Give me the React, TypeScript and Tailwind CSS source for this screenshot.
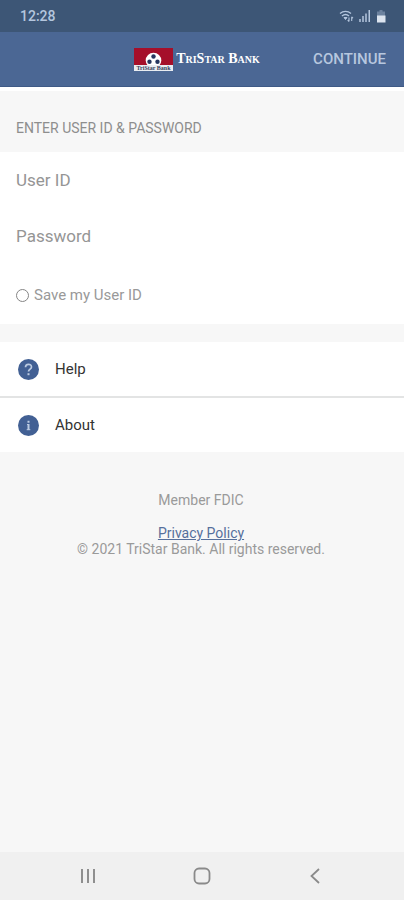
import React from "react";

const StatusBar: React.FC = () => {
  return (
    <div className="flex h-8 items-center justify-between bg-[#3d5676] pl-5 pr-[18px] text-[#b4c6de]">
      <span className="text-sm font-medium">12:28</span>
      <div className="flex items-center gap-[5px]">
        <svg width="15" height="13" viewBox="0 0 15 13" fill="none" stroke="currentColor" aria-hidden="true">
          <path d="M1 3.5C4.200 .7 8.800 .7 12 3.500" strokeWidth="1.300" />
          <path d="M3 6C5.200 4.100 7.800 4.100 10 6" strokeWidth="1.500" />
          <path d="M5 7.500h3L6.500 9.500z" fill="currentColor" />
          <path d="M10 7.500v4M8.700 10.200l1.300 1.300M12.700 11V6.800M14 8.100l-1.300-1.300" strokeWidth="1.100" />
        </svg>
        <svg width="12" height="12" viewBox="0 0 12 12" fill="currentColor" aria-hidden="true">
          <path d="M0 9h2v3H0zM3 6h2v6H3zM6 3.500h2V12H6z" opacity=".75" />
          <path d="M9.500 0H11v12H9.500z" />
        </svg>
        <svg width="10" height="13" viewBox="0 0 10 13" fill="currentColor" aria-hidden="true">
          <path d="M3.500 0h3v1.500H9V6H1V1.500h2.500z" opacity=".4" />
          <path d="M1 5.500h8.500v7H1z" className="text-[#dce4ef]" />
        </svg>
      </div>
    </div>
  );
};

const Logo: React.FC = () => {
  return (
    <div className="flex items-center gap-[3px] text-white">
      <svg width="39" height="23" viewBox="0 0 39 23" aria-hidden="true">
        <rect width="39" height="17" fill="#a50f2a" />
        <circle cx="19.500" cy="12.500" r="7.800" fill="#fff" />
        <circle cx="19.500" cy="8.500" r="2.200" fill="#26365f" />
        <circle cx="15.500" cy="13.800" r="2.200" fill="#26365f" />
        <circle cx="23.500" cy="13.800" r="2.200" fill="#26365f" />
        <rect y="17" width="39" height="6" fill="#e9ecf1" />
        <text
          x="19.500"
          y="22"
          textAnchor="middle"
          fontSize="6"
          fontWeight="700"
          fill="#35415c"
          fontFamily="'Liberation Serif', serif"
        >
          TriStar Bank
        </text>
      </svg>
      <span className="whitespace-nowrap font-['Liberation_Serif',serif] text-sm font-bold [font-variant-caps:small-caps]">
        TriStar Bank
      </span>
    </div>
  );
};

const Header: React.FC = () => {
  return (
    <header className="grid h-[55px] grid-cols-[1fr_auto_1fr] items-center border-b border-[#3f5a86] bg-[#4b6794] pl-2 pr-[18px]">
      <div />
      <Logo />
      <button type="button" className="justify-self-end text-[15px] font-medium text-[#b7c7df]">
        CONTINUE
      </button>
    </header>
  );
};

const LoginForm: React.FC = () => {
  return (
    <form>
      <h2 className="flex h-[65px] items-center border-t-4 border-white px-4 pt-3 text-sm text-[#8e8e8e]">
        ENTER USER ID &amp; PASSWORD
      </h2>
      <div className="bg-white px-4">
        <input
          type="text"
          aria-label="User ID"
          placeholder="User ID"
          className="block h-14 w-full text-[17px] outline-none placeholder:text-[#959595]"
        />
        <input
          type="password"
          aria-label="Password"
          placeholder="Password"
          className="block h-14 w-full text-[17px] outline-none placeholder:text-[#959595]"
        />
        <label className="flex h-15 items-center gap-[5px] pt-0.5 text-[15px] text-[#999]">
          <input type="checkbox" className="size-[13px] appearance-none rounded-full border border-[#858585] checked:bg-[#858585]" />
          Save my User ID
        </label>
      </div>
    </form>
  );
};

const HelpIcon: React.FC = () => {
  return (
    <svg width="21" height="21" viewBox="0 0 21 21" fill="none" stroke="#bccbe2" aria-hidden="true">
      <circle cx="10.500" cy="10.500" r="10.500" fill="#426094" stroke="none" />
      <path d="M7.500 8.200C7.500 4.400 13.500 4.400 13.500 7.900C13.500 10 10.500 10.200 10.500 12.600" strokeWidth="1.700" />
      <path d="M10.500 14.200v2" strokeWidth="2" />
    </svg>
  );
};

const AboutIcon: React.FC = () => {
  return (
    <svg width="21" height="21" viewBox="0 0 21 21" fill="none" stroke="#bccbe2" aria-hidden="true">
      <circle cx="10.500" cy="10.500" r="10.500" fill="#426094" stroke="none" />
      <path d="M10.500 5.800v2M10.500 9v6" strokeWidth="2" />
      <path d="M9 9.500h1.500M8.700 14.700h3.600" strokeWidth="1" />
    </svg>
  );
};

interface MenuRowProps {
  icon: React.ReactNode;
  label: string;
}

const MenuRow: React.FC<MenuRowProps> = ({ icon, label }) => {
  return (
    <button type="button" className="flex h-[54px] w-full items-center gap-4 bg-white px-[18px] text-left text-[15px] text-[#333]">
      {icon}
      {label}
    </button>
  );
};

const Footer: React.FC = () => {
  return (
    <footer className="flex flex-col items-center pl-4 pr-[18px] pt-10 text-sm leading-4 text-[#9a9a9a]">
      <p>Member FDIC</p>
      <a href="#privacy" className="mt-[17px] text-[#566f9c] underline">
        Privacy Policy
      </a>
      <p>© 2021 TriStar Bank. All rights reserved.</p>
    </footer>
  );
};

const NavigationBar: React.FC = () => {
  return (
    <nav className="flex h-12 items-center justify-between bg-[#f0f0f0] px-20 text-[#8a8a8a]">
      <button type="button" aria-label="Recent apps">
        <svg width="16" height="16" viewBox="0 0 16 16" fill="none" stroke="currentColor" strokeWidth="1.900">
          <path d="M2 1v14M8 1v14M14 1v14" />
        </svg>
      </button>
      <button type="button" aria-label="Home">
        <svg width="18" height="18" viewBox="0 0 18 18" fill="none" stroke="currentColor" strokeWidth="1.800">
          <rect x="1.500" y="1.500" width="15" height="15" rx="4.500" />
        </svg>
      </button>
      <button type="button" aria-label="Back">
        <svg width="16" height="16" viewBox="0 0 16 16" fill="none" stroke="currentColor" strokeWidth="1.800">
          <path d="M11 1L3.500 8l7.500 7" />
        </svg>
      </button>
    </nav>
  );
};

const App: React.FC = () => {
  return (
    <div className="flex min-h-screen flex-col bg-[#f7f7f7] font-[Roboto,sans-serif]">
      <StatusBar />
      <Header />
      <main className="flex-1">
        <LoginForm />
        <div className="mt-[18px] flex flex-col gap-0.5 bg-[#e3e4e4]">
          <MenuRow icon={<HelpIcon />} label="Help" />
          <MenuRow icon={<AboutIcon />} label="About" />
        </div>
        <Footer />
      </main>
      <NavigationBar />
    </div>
  );
};

export default App;
